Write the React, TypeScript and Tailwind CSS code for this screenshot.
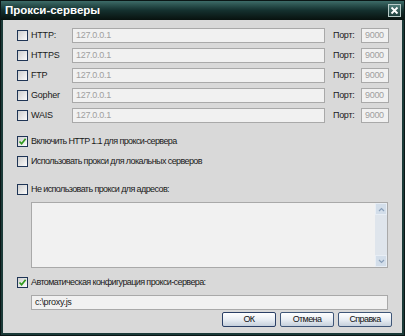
import React from "react";

const font = { fontFamily: '"Liberation Sans", Arial, sans-serif' };

function Check({ checked = false }: { checked?: boolean }) {
  return (
    <span className="w-[11px] h-[11px] shrink-0 border border-[#1f3556] bg-gradient-to-br from-[#cfcfcf] to-[#fbfbfb] flex items-center justify-center">
      {checked && (
        <svg width="9" height="9" viewBox="0 0 9 9">
          <path d="M1.5 4.5 L3.6 6.8 L7.6 1.8" fill="none" stroke="#2f9a1c" strokeWidth="1.7" />
        </svg>
      )}
    </span>
  );
}

function Field({ value, className = "" }: { value: string; className?: string }) {
  return (
    <div className={"h-[15px] border border-[#a9a9a9] bg-[#f1f1f1] flex items-center px-[3px] text-[9px] tracking-[-0.3px] text-[#a0a0a0] " + className}>
      {value}
    </div>
  );
}

function Btn({ label, focus = false }: { label: string; focus?: boolean }) {
  return (
    <button
      className={
        "w-[54px] h-[15px] rounded-[2px] border bg-gradient-to-b from-[#ffffff] via-[#e9eef4] to-[#c5d0dc] text-[9px] text-[#111] leading-none " +
        (focus ? "border-[#2a3f66]" : "border-[#3f5678]")
      }
    >
      {label}
    </button>
  );
}

export default function App() {
  const proxies = ["HTTP:", "HTTPS", "FTP", "Gopher", "WAIS"];

  return (
    <div style={font} className="w-[405px] h-[336px] bg-[#1b3a38] flex flex-col border border-[#0b1716]">
      {/* title bar */}
      <div className="h-[19px] shrink-0 bg-gradient-to-b from-[#3d6c68] via-[#14302e] to-[#08120f] flex items-center justify-between pl-[4px] pr-[3px]">
        <span className="text-white text-[11.5px] font-bold tracking-[0px]">Прокси-серверы</span>
        <span className="w-[13px] h-[13px] border border-[#b8cbc8] bg-gradient-to-b from-[#4f7c78] to-[#1d3e3b] flex items-center justify-center">
          <svg width="9" height="9" viewBox="0 0 9 9">
            <path d="M1.5 1.5 L7.5 7.5 M7.5 1.5 L1.5 7.5" stroke="#fff" strokeWidth="1.8" />
          </svg>
        </span>
      </div>

      {/* body */}
      <div className="flex-1 mx-[2px] mb-[2px] bg-[#d9d9d9] pl-[14px] pr-[11px] pt-[8px] text-[9px] tracking-[-0.6px] text-[#1a1a1a]">
        <div className="flex flex-col gap-[5px]">
          {proxies.map((p) => (
            <div key={p} className="flex items-center h-[15px]">
              <div className="w-[55px] flex items-center gap-[3px]">
                <Check />
                <span className="tracking-[-0.2px]">{p}</span>
              </div>
              <Field value="127.0.0.1" className="w-[253px]" />
              <span className="ml-[8px] w-[28px] tracking-[-0.3px]">Порт:</span>
              <Field value="9000" className="w-[28px]" />
            </div>
          ))}
        </div>

        <div className="mt-[13px] flex items-center gap-[3px] h-[11px]">
          <Check checked />
          <span>Включить HTTP 1.1 для прокси-сервера</span>
        </div>
        <div className="mt-[9px] flex items-center gap-[3px] h-[11px]">
          <Check />
          <span>Использовать прокси для локальных серверов</span>
        </div>
        <div className="mt-[17px] flex items-center gap-[3px] h-[11px]">
          <Check />
          <span>Не использовать прокси для адресов:</span>
        </div>

        <div className="mt-[7px] ml-[14px] w-[357px] h-[66px] border border-[#a9a9a9] bg-[#f1f1f1] flex justify-end">
          <div className="w-[12px] h-full bg-[#dfe5ec] flex flex-col justify-between">
            <div className="h-[12px] bg-[#d3deea] border border-[#e8eef5] flex items-center justify-center">
              <svg width="7" height="5" viewBox="0 0 7 5">
                <path d="M1 4 L3.5 1.5 L6 4" fill="none" stroke="#8aa0ba" strokeWidth="1.2" />
              </svg>
            </div>
            <div className="h-[12px] bg-[#d3deea] border border-[#e8eef5] flex items-center justify-center">
              <svg width="7" height="5" viewBox="0 0 7 5">
                <path d="M1 1 L3.5 3.5 L6 1" fill="none" stroke="#8aa0ba" strokeWidth="1.2" />
              </svg>
            </div>
          </div>
        </div>

        <div className="mt-[9px] flex items-center gap-[3px] h-[11px]">
          <Check checked />
          <span>Автоматическая конфигурация прокси-сервера:</span>
        </div>
        <Field value="c:\proxy.js" className="mt-[7px] ml-[14px] w-[357px] !text-[#1a1a1a]" />

        <div className="mt-[2px] flex justify-end gap-[4px] -mr-[1px]">
          <Btn label="ОК" focus />
          <Btn label="Отмена" />
          <Btn label="Справка" />
        </div>
      </div>
    </div>
  );
}
